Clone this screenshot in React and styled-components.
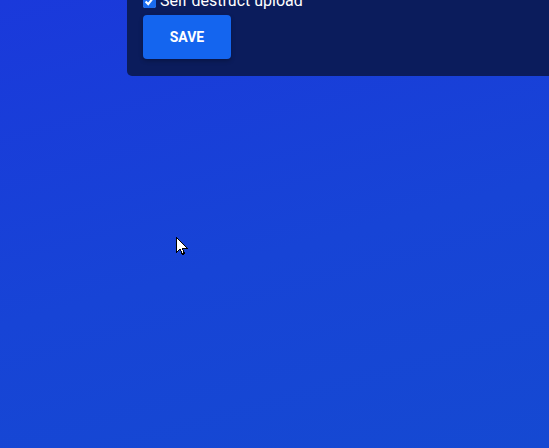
import React from 'react';
import styled, { createGlobalStyle } from 'styled-components';

const GlobalStyle = createGlobalStyle`
    html, body {
        margin: 0;
        padding: 0;
        height: 100%;
    }
    body {
        background: linear-gradient(165deg, #1a39db 0%, #1744d6 55%, #1549d2 100%);
        font-family: Roboto, 'Liberation Sans', sans-serif;
        overflow: hidden;
    }
    #root {
        height: 100%;
    }
`

const Page = styled.div`
    position: relative;
    display: flex;
    flex-direction: column;
    height: 448px;
    width: 549px;
`

const SettingsPanel = styled.div`
    margin-left: 127px;
    margin-top: -11px;
    background-color: #0b1c5c;
    border-radius: 0 0 0 5px;
    padding: 0 16px 17px 16px;
    display: flex;
    flex-direction: column;
    align-items: flex-start;
`

const CheckRow = styled.label`
    display: flex;
    align-items: center;
    gap: 4px;
    height: 24px;
    margin-bottom: 2px;
    color: #ffffff;
    font-size: 16px;
    line-height: 24px;
`

const Check = styled.input`
    margin: 0;
    width: 13px;
    height: 13px;
    accent-color: #1a6cf0;
`

const SaveButton = styled.button`
    width: 88px;
    height: 44px;
    border: none;
    border-radius: 4px;
    background-color: #1465ef;
    color: #ffffff;
    font-family: Roboto, 'Liberation Sans', sans-serif;
    font-weight: 700;
    font-size: 14px;
    text-transform: uppercase;
    box-shadow: 0 2px 4px rgba(0, 0, 0, 0.25);
    cursor: pointer;
`

const Cursor = styled.svg`
    position: absolute;
    left: 176px;
    top: 237px;
`

const App = () => {
    return (
        <>
            <GlobalStyle />
            <Page>
                <SettingsPanel>
                    <CheckRow>
                        <Check type='checkbox' defaultChecked />
                        Self destruct upload
                    </CheckRow>
                    <SaveButton>Save</SaveButton>
                </SettingsPanel>
                {/* mouse pointer */}
                <Cursor width='12' height='19' viewBox='0 0 12 19'>
                    <path
                        d='M0.5 0.5 L0.5 15.5 L4 12 L6.5 17.5 L8.5 16.5 L6 11 L11 11 Z'
                        fill='#ffffff'
                        stroke='#000000'
                        strokeWidth='1'
                        shapeRendering='crispEdges'
                    />
                </Cursor>
            </Page>
        </>
    )
}

export default App;
